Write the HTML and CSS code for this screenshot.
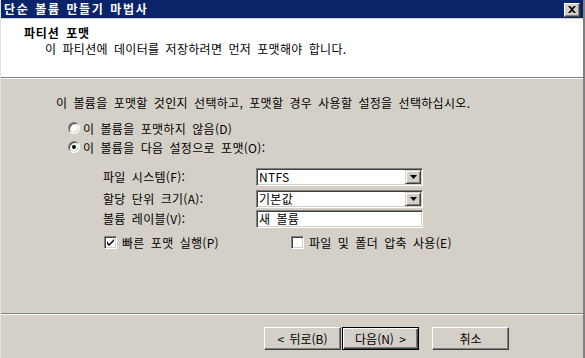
FILE: index.html
```html
<!DOCTYPE html>
<html lang="ko">
<head>
<meta charset="utf-8">
<title>단순 볼륨 만들기 마법사</title>
<link rel="stylesheet" href="styles.css">
</head>
<body>
<div class="window">
  <div class="titlebar">
    <span class="title">단순 볼륨 만들기 마법사</span>
    <span class="close"><svg width="8" height="7" viewBox="0 0 8 7"><path d="M0 0h2l2 2 2-2h2L5 3.5 8 7H6L4 5 2 7H0l3-3.5z" fill="#000"/></svg></span>
  </div>
  <div class="header">
    <div class="h-title">파티션 포맷</div>
    <div class="h-sub">이 파티션에 데이터를 저장하려면 먼저 포맷해야 합니다.</div>
  </div>
  <div class="etch"></div>
  <div class="content">
    <div class="intro">이 볼륨을 포맷할 것인지 선택하고, 포맷할 경우 사용할 설정을 선택하십시오.</div>
    <div class="radio-row first"><span class="radio"></span><span>이 볼륨을 포맷하지 않음(D)</span></div>
    <div class="radio-row second"><span class="radio checked"></span><span>이 볼륨을 다음 설정으로 포맷(O):</span></div>
    <div class="form">
      <div class="label r1">파일 시스템(F):</div>
      <div class="combo r1"><span class="val">NTFS</span><span class="arrow"><svg width="7" height="4" viewBox="0 0 7 4"><path d="M0 0h7L3.5 4z" fill="#000"/></svg></span></div>
      <div class="label r2">할당 단위 크기(A):</div>
      <div class="combo r2"><span class="val">기본값</span><span class="arrow"><svg width="7" height="4" viewBox="0 0 7 4"><path d="M0 0h7L3.5 4z" fill="#000"/></svg></span></div>
      <div class="label r3">볼륨 레이블(V):</div>
      <div class="textbox r3"><span class="val">새 볼륨</span></div>
    </div>
    <div class="checks">
      <div class="check-item"><span class="checkbox"><svg width="7" height="7" viewBox="0 0 7 7"><path d="M0 2v3l2 2L7 2V0L2 5z" fill="#000"/></svg></span><span>빠른 포맷 실행(P)</span></div>
      <div class="check-item"><span class="checkbox"></span><span>파일 및 폴더 압축 사용(E)</span></div>
    </div>
  </div>
  <div class="etch"></div>
  <div class="footer">
    <button class="btn back">&lt; 뒤로(B)</button>
    <button class="btn next default">다음(N) &gt;</button>
    <button class="btn cancel">취소</button>
  </div>
</div>
</body>
</html>
```
FILE: styles.css
```css
html, body {
  margin: 0;
  padding: 0;
  background: #d4d0c8;
}
.window {
  width: 585px;
  height: 358px;
  box-sizing: border-box;
  border-right: 2px solid #808080;
  border-left: 1px solid #e4e2dc;
  display: flex;
  flex-direction: column;
  background: #d4d0c8;
  font-family: "Noto Sans CJK KR", "Noto Sans", sans-serif;
  font-size: 12px;
  word-spacing: 2.5px;
  letter-spacing: 0.3px;
  color: #000;
  overflow: hidden;
}
.titlebar {
  height: 18px;
  border-bottom: 1px solid #d4d0c8;
  background: #0a246a;
  display: flex;
  align-items: center;
  justify-content: space-between;
  padding: 0 3px 0 4px;
  margin-left: -1px;
}
.title {
  color: #fff;
  font-weight: bold;
  line-height: 18px;
  letter-spacing: 1.6px;
  word-spacing: 1px;
}
.close {
  width: 14px;
  height: 12px;
  background: #d4d0c8;
  border: 1px solid;
  border-color: #fff #404040 #404040 #fff;
  box-shadow: inset -1px -1px #808080;
  display: flex;
  align-items: center;
  justify-content: center;
  margin-top: 1px;
}
.header {
  height: 58px;
  background: #fff;
  box-sizing: border-box;
  padding-top: 6px;
}
.h-title {
  font-weight: bold;
  line-height: 16px;
  padding-left: 23px;
  letter-spacing: 0.8px;
}
.h-sub {
  line-height: 16px;
  padding-left: 44px;
}
.etch {
  height: 1px;
  background: #808080;
  border-bottom: 1px solid #fff;
}
.content {
  height: 234px;
  box-sizing: border-box;
  padding: 16px 0 0 55px;
}
.intro {
  line-height: 16px;
}
.radio-row {
  display: flex;
  align-items: center;
  gap: 3px;
  height: 16px;
  margin-left: 12px;
}
.radio-row.first { margin-top: 9px; }
.radio-row.second { margin-top: 3px; }
.radio {
  width: 12px;
  height: 12px;
  box-sizing: border-box;
  border-radius: 50%;
  background: #fff;
  border: 1px solid;
  border-color: #808080 #fff #fff #808080;
  box-shadow: inset 1px 1px #404040, inset -1px -1px #d4d0c8;
  position: relative;
}
.radio.checked::after {
  content: "";
  position: absolute;
  left: 3px;
  top: 3px;
  width: 4px;
  height: 4px;
  border-radius: 50%;
  background: #000;
}
.form {
  margin: 13px 0 0 47px;
  display: grid;
  grid-template-columns: 153px 167px;
}
.label {
  line-height: 18px;
  height: 18px;
}
.r2 { margin-top: 4px; }
.r3 { margin-top: 2px; }
.combo, .textbox {
  height: 18px;
  box-sizing: border-box;
  background: #fff;
  border: 1px solid;
  border-color: #808080 #fff #fff #808080;
  box-shadow: inset 1px 1px #404040, inset -1px -1px #d4d0c8;
  display: flex;
  align-items: center;
  justify-content: space-between;
}
.val {
  padding-left: 2px;
  line-height: 16px;
}
.arrow {
  width: 14px;
  height: 12px;
  margin-right: 1px;
  background: #d4d0c8;
  border: 1px solid;
  border-color: #d4d0c8 #404040 #404040 #d4d0c8;
  box-shadow: inset 1px 1px #fff, inset -1px -1px #808080;
  display: flex;
  align-items: center;
  justify-content: center;
}
.checks {
  margin: 6px 0 0 48px;
  display: grid;
  grid-template-columns: 187px auto;
}
.check-item {
  display: flex;
  align-items: center;
  gap: 5px;
  height: 16px;
}
.checkbox {
  width: 13px;
  height: 13px;
  box-sizing: border-box;
  background: #fff;
  border: 1px solid;
  border-color: #808080 #fff #fff #808080;
  box-shadow: inset 1px 1px #404040, inset -1px -1px #d4d0c8;
  display: flex;
  align-items: center;
  justify-content: center;
}
.footer {
  flex: 1;
  display: flex;
  justify-content: flex-end;
  align-items: flex-start;
  padding: 12px 74px 0 0;
}
.btn {
  width: 77px;
  height: 23px;
  box-sizing: border-box;
  margin: 0;
  padding: 0;
  background: #d4d0c8;
  font-family: "Noto Sans CJK KR", "Noto Sans", sans-serif;
  font-size: 12px;
  word-spacing: 2px;
  color: #000;
  border: 1px solid;
  border-color: #fff #404040 #404040 #fff;
  box-shadow: inset -1px -1px #808080;
  line-height: 20px;
}
.btn.next { margin-left: 1px; }
.btn.cancel { margin-left: 13px; }
.btn.default {
  border: 1px solid #000;
  box-shadow: inset 1px 1px #fff, inset -1px -1px #404040, inset -2px -2px #808080;
}
```
